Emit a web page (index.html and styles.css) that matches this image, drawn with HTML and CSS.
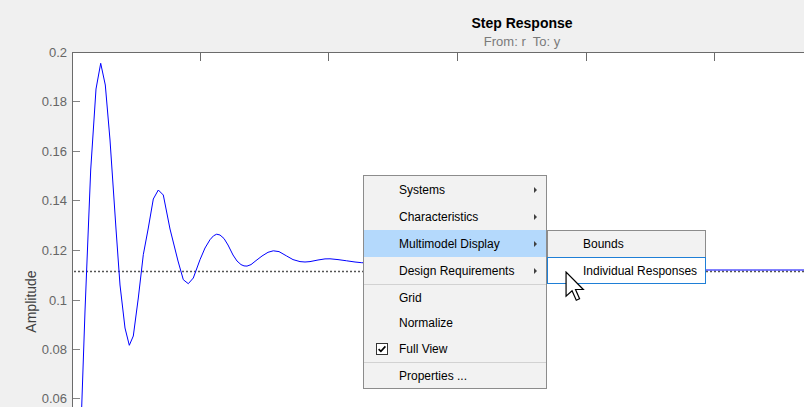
FILE: index.html
```html
<!DOCTYPE html>
<html>
<head>
<meta charset="utf-8">
<title>Step Response</title>
<link rel="stylesheet" href="styles.css">
</head>
<body>
<div class="figure">
  <header class="titles">
    <div class="title">Step Response</div>
    <div class="subtitle">From: r  To: y</div>
  </header>

  <svg class="plot" viewBox="0 52 804 355" width="804" height="355">
    <rect x="72.5" y="52.5" width="760" height="380" fill="#ffffff" stroke="#6b6b6b" stroke-width="1"/>
    <path class="ticks" d="M200.5 52V61 M328.5 52V61 M457.5 52V61 M586.5 52V61 M714.5 52V61"/>
    <path class="ticks light" d="M73 101.5H80 M73 151.5H80 M73 200.5H80 M73 250.5H80 M73 300.5H80 M73 349.5H80 M73 398.5H80"/>
    <g class="ylabels">
      <text x="67" y="57.1">0.2</text>
      <text x="67" y="106.1">0.18</text>
      <text x="67" y="156.1">0.16</text>
      <text x="67" y="205.1">0.14</text>
      <text x="67" y="255.1">0.12</text>
      <text x="67" y="305.1">0.1</text>
      <text x="67" y="354.1">0.08</text>
      <text x="67" y="403.1">0.06</text>
    </g>
    <text class="ytitle" transform="translate(36 301.5) rotate(-90)">Amplitude</text>
    <line class="steady" x1="74" y1="271.5" x2="804" y2="271.5"/>
    <path class="curve" d="M80.5 420 L81.7 407 L85 311 L88.3 229 L90.7 170 L96 89 L100.7 63.3 L105.3 85 L110 140 L116 229 L120 285 L125 328 L129.3 345.3 L133.3 336 L138.3 298 L143.3 254.7 L148.3 228 L153.3 199 L158.3 190 L163.3 195 L170 229 L178 261 L183.3 279.7 L188.3 283.7 L193.3 278 L200 259.7 L205 248 L210 239.7 L213.5 235.8 L216.7 234.2 L220 235 L224 238.5 L228 245 L233 255 L237 261 L241 264.6 L244 265.9 L247 266.1 L251 264.6 L256 260.6 L262 256 L268 252.3 L273.3 250.8 L279 251.6 L286.7 256 L293 259.6 L300 261.6 L305 262 L310 261.6 L318 260 L325 258.9 L330 258.8 L338 259.6 L346.7 260.8 L355 262 L361.7 262.7 L380 263.6 L400 264.5 L460 266 L550 268 L640 269.3 L706 270 L804 270"/>
  </svg>

  <div class="menu">
    <div class="group first">
      <div class="item"><span class="gutter"></span><span class="label">Systems</span><i class="arrow"></i></div>
      <div class="item"><span class="gutter"></span><span class="label">Characteristics</span><i class="arrow"></i></div>
      <div class="item active"><span class="gutter"></span><span class="label">Multimodel Display</span><i class="arrow"></i>
        <div class="submenu">
          <div class="sub-item">Bounds</div>
          <div class="sub-item focused">Individual Responses</div>
        </div>
      </div>
      <div class="item"><span class="gutter"></span><span class="label">Design Requirements</span><i class="arrow"></i></div>
    </div>
    <div class="group">
      <div class="item sep"><span class="gutter"></span><span class="label">Grid</span></div>
      <div class="item"><span class="gutter"></span><span class="label">Normalize</span></div>
      <div class="item"><span class="gutter"><svg class="check" width="12" height="12" viewBox="0 0 12 12"><rect x="0.5" y="0.5" width="11" height="11" fill="#ffffff" stroke="#333333"/><path d="M2.6 6.1 L4.9 8.4 L9.4 3.4" fill="none" stroke="#000000" stroke-width="1.6"/></svg></span><span class="label">Full View</span></div>
    </div>
    <div class="group">
      <div class="item sep"><span class="gutter"></span><span class="label">Properties ...</span></div>
    </div>
  </div>

  <svg class="cursor" width="20" height="32" viewBox="-0.7 -0.7 13.3 21.3">
    <path d="M0 0 V16 L4 12.5 L6.8 18.8 L9 17.8 L6.3 11.6 H11.5 Z" fill="#ffffff" stroke="#000000" stroke-width="0.8" stroke-linejoin="miter"/>
  </svg>
</div>
</body>
</html>
```

FILE: styles.css
```css
* {
  box-sizing: border-box;
}

html,
body {
  margin: 0;
  padding: 0;
}

body {
  width: 804px;
  height: 407px;
  overflow: hidden;
  background: #f0f0f0;
  font-family: "Liberation Sans", Arial, sans-serif;
}

.figure {
  position: relative;
  width: 804px;
  height: 407px;
}

.titles {
  height: 52px;
  padding: 15px 0 0 240px;
  text-align: center;
}

.title {
  font-weight: bold;
  font-size: 14px;
  line-height: 16px;
  color: #000000;
}

.subtitle {
  margin-top: 4px;
  font-size: 13px;
  line-height: 14px;
  color: #7a7a7a;
  white-space: pre;
}

.plot {
  display: block;
  overflow: visible;
}

.ticks {
  stroke: #6b6b6b;
  stroke-width: 1;
  fill: none;
}

.ticks.light {
  stroke: #858585;
}

.ylabels text {
  font-family: "Liberation Sans", Arial, sans-serif;
  font-size: 13px;
  fill: #666666;
  text-anchor: end;
}

.ytitle {
  font-family: "Liberation Sans", Arial, sans-serif;
  font-size: 14px;
  fill: #404040;
  text-anchor: middle;
}

.steady {
  stroke: #555555;
  stroke-width: 1.4;
  stroke-dasharray: 2 2;
}

.curve {
  fill: none;
  stroke: #0000ff;
  stroke-width: 1;
  stroke-linejoin: round;
}

.menu {
  position: absolute;
  left: 363px;
  top: 175px;
  width: 184px;
  background: #f2f2f2;
  border: 1px solid #8c8c8c;
  font-size: 12px;
  color: #000000;
}

.item {
  position: relative;
  display: flex;
  align-items: center;
  height: 26px;
  padding-right: 9px;
  white-space: nowrap;
}

.group.first .item {
  height: 27px;
}

.item.sep {
  border-top: 1px solid #d2d2d2;
}

.item.active {
  background: #b4d9fc;
}

.gutter {
  flex: none;
  width: 35px;
  display: flex;
  align-items: center;
  padding-left: 12px;
}

.check {
  display: block;
}

.arrow {
  margin-left: auto;
  width: 0;
  height: 0;
  border-left: 3px solid #404040;
  border-top: 3px solid transparent;
  border-bottom: 3px solid transparent;
}

.submenu {
  position: absolute;
  left: calc(100% + 1px);
  top: 0;
  width: 159px;
  background: #f2f2f2;
  border: 1px solid #8c8c8c;
}

.sub-item {
  display: flex;
  align-items: center;
  height: 26px;
  padding-left: 35px;
  white-space: nowrap;
}

.sub-item.focused {
  position: relative;
  height: 27px;
  margin: 0 -1px -1px -1px;
  padding-left: 36px;
  box-shadow: inset 0 0 0 1px #1f7fd6;
  background: #ffffff;
}

.cursor {
  position: absolute;
  left: 565px;
  top: 271px;
}
```
